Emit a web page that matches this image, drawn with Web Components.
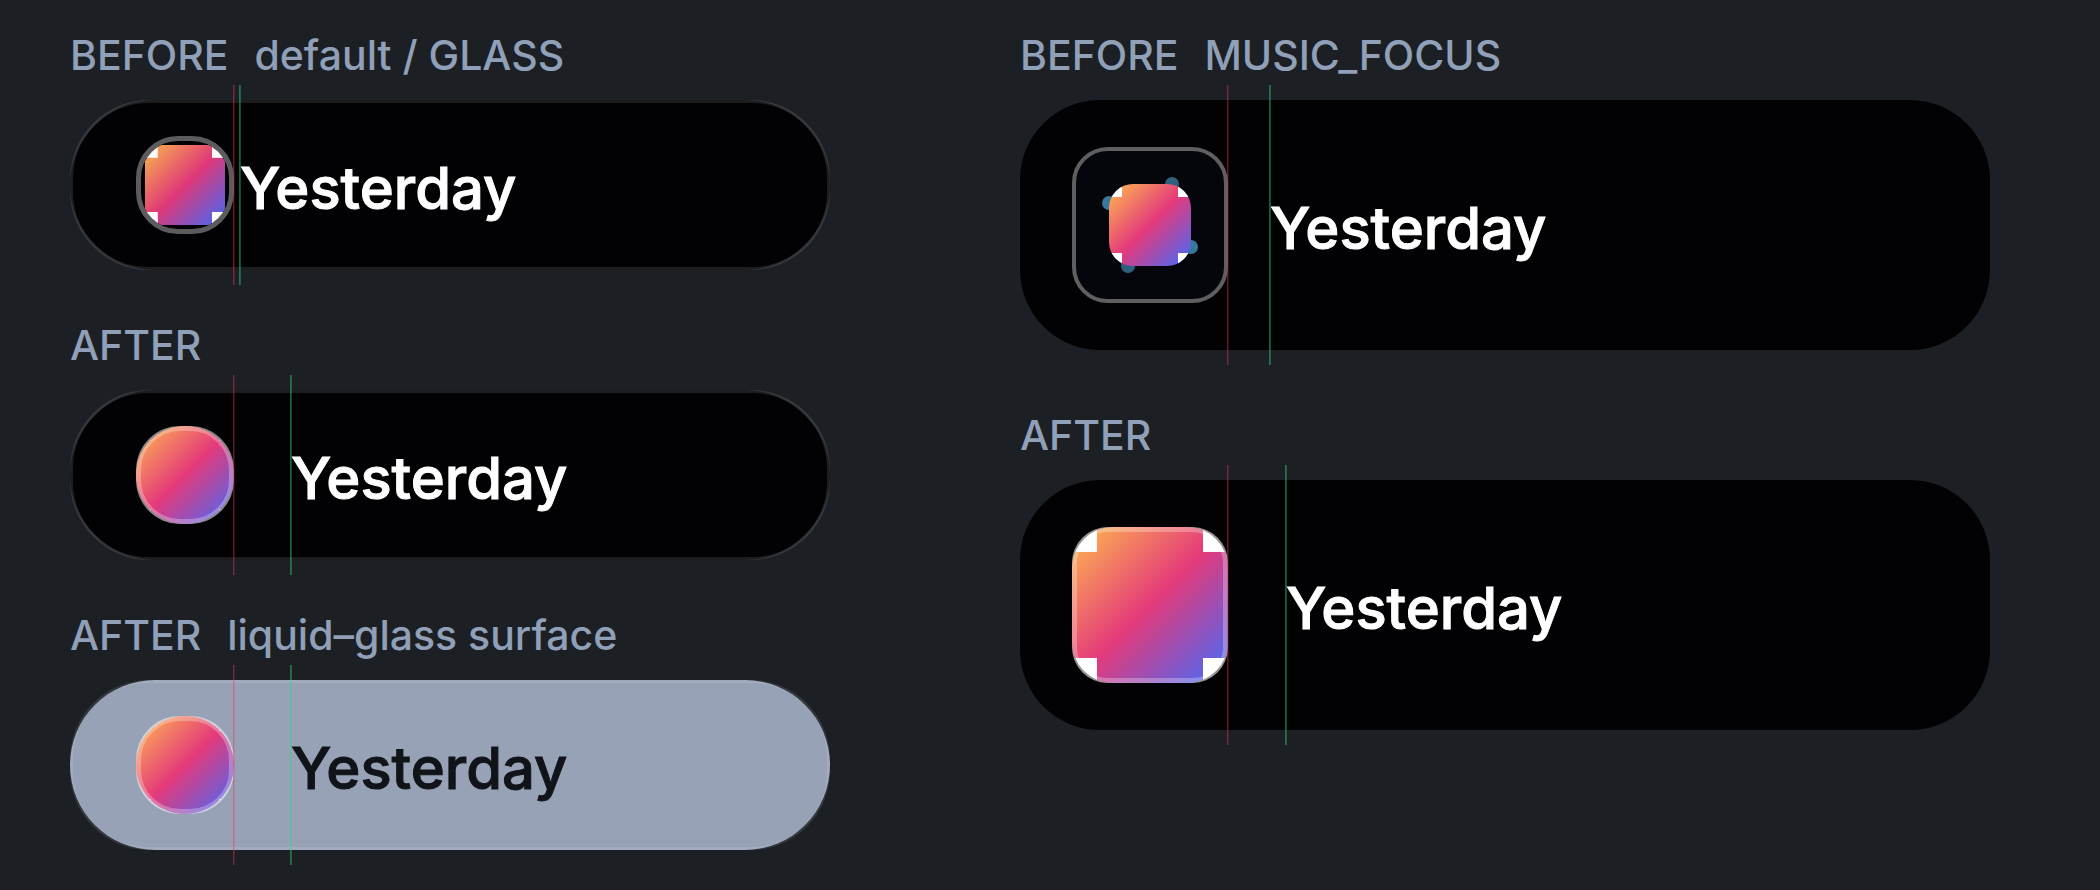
<!DOCTYPE html>
<html lang="en">
<head>
<meta charset="utf-8">
<title>Pill artwork</title>
<style>
  body {
    margin: 0;
    min-height: 100vh;
    background: #1c1f24;
    color: #8fa0b8;
    font-family: Inter, "Liberation Sans", sans-serif;
  }
</style>
</head>
<body>
<pill-board>
  <pill-column>
    <pill-sample state="BEFORE" note="default / GLASS" tight>
      <cover-icon slot="icon" kind="inset"></cover-icon>Yesterday
    </pill-sample>
    <pill-sample state="AFTER">
      <cover-icon slot="icon" kind="round"></cover-icon>Yesterday
    </pill-sample>
    <pill-sample state="AFTER" note="liquid–glass surface" glass>
      <cover-icon slot="icon" kind="round"></cover-icon>Yesterday
    </pill-sample>
  </pill-column>
  <pill-column large>
    <pill-sample state="BEFORE" note="MUSIC_FOCUS" large tight>
      <cover-icon slot="icon" kind="orbit"></cover-icon>Yesterday
    </pill-sample>
    <pill-sample state="AFTER" large>
      <cover-icon slot="icon" kind="full"></cover-icon>Yesterday
    </pill-sample>
  </pill-column>
</pill-board>

<script>
class PillBoard extends HTMLElement {
  connectedCallback() {
    this.attachShadow({ mode: 'open' });
    this.shadowRoot.innerHTML = `
      <style>
        :host {
          display: grid;
          grid-template-columns: 76fr 97fr;
          column-gap: 190px;
          padding: 30px 110px 20px 70px;
        }
      </style>
      <slot></slot>
    `;
  }
}
customElements.define('pill-board', PillBoard);

class PillColumn extends HTMLElement {
  connectedCallback() {
    this.attachShadow({ mode: 'open' });
    this.shadowRoot.innerHTML = `
      <style>
        :host {
          display: flex;
          flex-direction: column;
          gap: 50px;
        }
        :host([large]) {
          gap: 60px;
        }
      </style>
      <slot></slot>
    `;
  }
}
customElements.define('pill-column', PillColumn);

// Album artwork: diagonal gradient with a white square in each corner
class AlbumArt extends HTMLElement {
  connectedCallback() {
    this.attachShadow({ mode: 'open' });
    this.shadowRoot.innerHTML = `
      <style>
        :host {
          --corner: 16%;
          display: block;
          background:
            linear-gradient(#fff 0 0) 0 0 / var(--corner) var(--corner) no-repeat,
            linear-gradient(#fff 0 0) 100% 0 / var(--corner) var(--corner) no-repeat,
            linear-gradient(#fff 0 0) 0 100% / var(--corner) var(--corner) no-repeat,
            linear-gradient(#fff 0 0) 100% 100% / var(--corner) var(--corner) no-repeat,
            linear-gradient(135deg, #ffbc4e, #e43a7a 50%, #3e6cff);
        }
      </style>
    `;
  }
}
customElements.define('album-art', AlbumArt);

class CoverIcon extends HTMLElement {
  connectedCallback() {
    const orbit = this.getAttribute('kind') === 'orbit';
    this.attachShadow({ mode: 'open' });
    this.shadowRoot.innerHTML = `
      <style>
        :host {
          display: grid;
          place-items: center;
          position: relative;
          box-sizing: border-box;
          flex: none;
          width: 98px;
          height: 98px;
          border-radius: 42px;
        }
        :host([kind="inset"]) {
          border: 5px solid #5c5c5e;
          overflow: hidden;
        }
        :host([kind="inset"]) album-art {
          width: 80px;
          height: 80px;
          opacity: 0.98;
        }
        :host([kind="round"]) {
          border-radius: 44px;
          background: rgba(255, 255, 255, 0.35);
        }
        :host([kind="round"]) album-art {
          --corner: 15%;
          width: 98px;
          height: 98px;
          border-radius: 49px;
        }
        :host([kind="orbit"]),
        :host([kind="full"]) {
          width: 156px;
          height: 156px;
          border-radius: 36px;
        }
        :host([kind="orbit"]) {
          border: 4px solid #5f5f61;
          background: #04060b;
        }
        :host([kind="orbit"]) album-art {
          position: relative;
          width: 82px;
          height: 82px;
          border-radius: 24px;
        }
        :host([kind="full"]) {
          background: #6c6c6e;
        }
        :host([kind="full"]) album-art {
          width: 156px;
          height: 156px;
          border-radius: 41px;
        }
        .rim {
          position: absolute;
          inset: 0;
          border: 5px solid rgba(255, 255, 255, 0.28);
          border-radius: inherit;
        }
        svg {
          position: absolute;
          inset: -4px;
        }
      </style>
      ${orbit ? `
        <svg width="156" height="156" viewBox="0 0 156 156">
          <g fill="#2f607e"><circle cx="100" cy="37" r="7"/><circle cx="56" cy="119" r="7"/></g>
          <g fill="#38789c"><circle cx="37" cy="56" r="7"/><circle cx="119" cy="100" r="7"/></g>
        </svg>` : ''}
      <album-art></album-art>
      <div class="rim"></div>
    `;
    if (orbit || this.getAttribute('kind') === 'inset') {
      this.shadowRoot.querySelector('.rim').remove();
    }
  }
}
customElements.define('cover-icon', CoverIcon);

class PillSample extends HTMLElement {
  connectedCallback() {
    const note = this.getAttribute('note');
    this.attachShadow({ mode: 'open' });
    this.shadowRoot.innerHTML = `
      <style>
        :host {
          display: block;
          --gap: 57px;
        }
        :host([large]) {
          --gap: 58px;
        }
        :host([tight]) {
          --gap: 6px;
        }
        :host([large][tight]) {
          --gap: 42px;
        }
        h2 {
          margin: 0 0 20px;
          font-size: 41px;
          line-height: 50px;
          font-weight: 500;
          white-space: pre;
        }
        h2 span {
          margin-left: 4px;
        }
        .pill {
          position: relative;
          display: flex;
          align-items: center;
          box-sizing: border-box;
          height: 170px;
          padding-left: 66px;
          border-radius: 85px;
          background: #020204;
          color: #fff;
        }
        .pill::before {
          content: '';
          position: absolute;
          inset: 0;
          border: 3px solid rgba(255, 255, 255, 0.11);
          border-radius: 79px;
        }
        :host([glass]) .pill {
          background: #98a2b6;
          color: #101418;
        }
        :host([large]) .pill {
          height: 250px;
          padding-left: 52px;
          border-radius: 80px;
        }
        :host([large]) .pill::before {
          display: none;
        }
        .icon,
        .title {
          position: relative;
          display: flex;
          align-items: center;
          height: 100%;
        }
        .title {
          box-sizing: border-box;
          margin-left: var(--gap);
          padding-top: 6px;
          font-size: 58px;
          line-height: 70px;
          font-weight: 500;
          -webkit-text-stroke: 1px currentColor;
        }
        /* guides: red on the icon's right edge, green on the title's left edge */
        .icon::after,
        .title::before {
          content: '';
          position: absolute;
          top: -15px;
          bottom: -15px;
          width: 2px;
        }
        .icon::after {
          right: -1px;
          background: linear-gradient(90deg, rgba(240, 50, 80, 0.45) 50%, rgba(240, 50, 80, 0.18) 50%);
        }
        .title::before {
          left: -1px;
          background: linear-gradient(90deg, rgba(50, 215, 120, 0.45) 50%, rgba(50, 215, 120, 0.35) 50%);
        }
      </style>
      <h2>${this.getAttribute('state')}${note ? `  <span>${note}</span>` : ''}</h2>
      <div class="pill">
        <div class="icon"><slot name="icon"></slot></div>
        <div class="title"><slot></slot></div>
      </div>
    `;
  }
}
customElements.define('pill-sample', PillSample);
</script>
</body>
</html>
